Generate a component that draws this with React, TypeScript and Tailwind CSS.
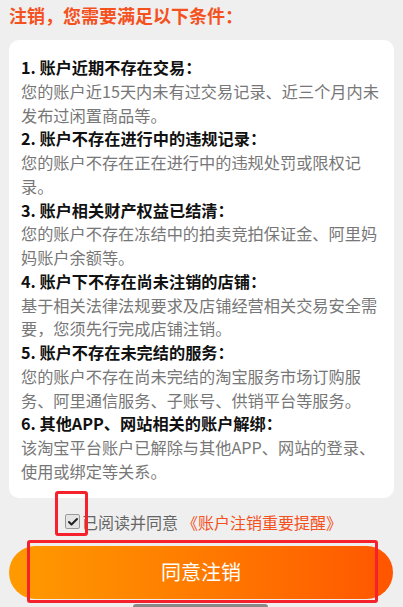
import { Check } from 'lucide-react'

const conditions = [
  {
    title: '1. 账户近期不存在交易：',
    body: '您的账户近15天内未有过交易记录、近三个月内未发布过闲置商品等。',
  },
  {
    title: '2. 账户不存在进行中的违规记录：',
    body: '您的账户不存在正在进行中的违规处罚或限权记录。',
  },
  {
    title: '3. 账户相关财产权益已结清：',
    body: '您的账户不存在冻结中的拍卖竞拍保证金、阿里妈妈账户余额等。',
  },
  {
    title: '4. 账户下不存在尚未注销的店铺：',
    body: '基于相关法律法规要求及店铺经营相关交易安全需要，您须先行完成店铺注销。',
  },
  {
    title: '5. 账户不存在未完结的服务：',
    body: '您的账户不存在尚未完结的淘宝服务市场订购服务、阿里通信服务、子账号、供销平台等服务。',
  },
  {
    title: '6. 其他APP、网站相关的账户解绑：',
    body: '该淘宝平台账户已解除与其他APP、网站的登录、使用或绑定等关系。',
  },
]

export default function App() {
  return (
    <main className="relative h-[607px] w-full overflow-hidden bg-[#efefef] font-['Noto_Sans_CJK_SC',sans-serif]">
      <h1 className="px-[9px] pt-[3px] text-[18px] leading-6 font-bold text-[#f4511e]">
        注销，您需要满足以下条件：
      </h1>

      <section className="mx-[9px] mt-[13px] rounded-[10px] bg-white px-3 pt-4 pb-[14px] text-[16.2px] leading-[23.75px]">
        {conditions.map((item) => (
          <div key={item.title}>
            <h2 className="font-bold text-[#111]">{item.title}</h2>
            <p className="text-[#777]">{item.body}</p>
          </div>
        ))}
      </section>

      <label className="mt-[12px] flex items-center pl-[65px] text-[16px] leading-6">
        <span className="mr-[2px] flex h-[15px] w-[15px] items-center justify-center rounded-[2px] border border-[#9a9a9a] bg-[#e4e4e4]">
          <Check className="h-3 w-3 text-[#222]" strokeWidth={4} />
        </span>
        <span className="text-[#666]">已阅读并同意</span>
        <span className="ml-1 text-[#f4511e]">《账户注销重要提醒》</span>
      </label>

      <button className="mx-[9px] mt-[12px] flex h-[53px] w-[384px] items-center justify-center rounded-full bg-gradient-to-r from-[#ff9a00] to-[#ff5500] text-[20px] text-white">
        同意注销
      </button>

      <div className="absolute bottom-0 left-[133px] h-[3px] w-[135px] rounded-t bg-[#8a8a8a]" />

      {/* annotation boxes */}
      <div className="absolute top-[491px] left-[55px] h-[45px] w-[33px] rounded-[3px] border-[3px] border-[#f5222d]" />
      <div className="absolute top-[540px] left-[27px] h-[63px] w-[351px] rounded-[3px] border-[3px] border-[#f5222d]" />
    </main>
  )
}
